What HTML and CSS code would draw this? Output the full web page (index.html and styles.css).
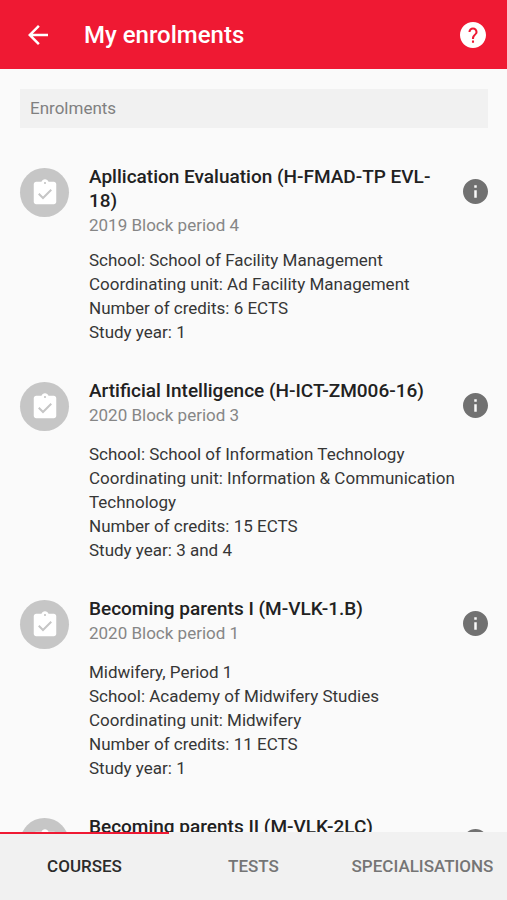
FILE: index.html
```
<!DOCTYPE html>
<html lang="en">
<head>
    <meta charset="UTF-8">
    <meta name="viewport" content="width=device-width, initial-scale=1">
    <title>My enrolments</title>
    <link rel="stylesheet" href="styles.css">
</head>
<body>
    <svg class="sprite">
        <symbol id="clipboard" viewBox="0 0 24 24">
            <path d="M19 3h-4.18C14.4 1.84 13.3 1 12 1s-2.4.84-2.82 2H5c-1.1 0-2 .9-2 2v14c0 1.1.9 2 2 2h14c1.1 0 2-.9 2-2V5c0-1.1-.9-2-2-2zm-7 .2c.44 0 .8.36.8.8s-.36.8-.8.8-.8-.36-.8-.8.36-.8.8-.8z"/>
            <path class="check" d="M7 12.6l3.4 3.4 6.6-6.6"/>
        </symbol>
        <symbol id="info" viewBox="2 2 20 20">
            <path d="M12 2C6.48 2 2 6.48 2 12s4.48 10 10 10 10-4.48 10-10S17.52 2 12 2zm1 15h-2v-6h2v6zm0-8h-2V7h2v2z"/>
        </symbol>
    </svg>
    <header class="bar">
        <button class="bar-btn">
            <svg viewBox="4 4 16 16" width="20" height="20"><path d="M20 11H7.83l5.59-5.59L12 4l-8 8 8 8 1.41-1.41L7.83 13H20v-2z"/></svg>
        </button>
        <h1>My enrolments</h1>
        <button class="bar-btn">
            <svg viewBox="2 2 20 20" width="26" height="26"><path d="M12 2C6.48 2 2 6.48 2 12s4.48 10 10 10 10-4.48 10-10S17.52 2 12 2zm.8 15.9h-1.6v-1.6h1.6v1.6zm1.9-6.4l-.8.8c-.7.7-1.1 1.3-1.1 2.7h-1.6v-.4c0-1 .4-1.9 1.1-2.6l1.1-1.1c.3-.3.5-.8.5-1.3 0-1-.8-1.8-1.9-1.8s-1.9.8-1.9 1.8H8.500c0-1.900 1.600-3.400 3.500-3.400s3.500 1.500 3.500 3.400c0 .8-.3 1.400-.8 1.900z"/></svg>
        </button>
    </header>
    <main class="content">
        <h2 class="subheader">Enrolments</h2>
        <ul class="list">
            <li class="item">
                <span class="avatar"><svg><use href="#clipboard"/></svg></span>
                <div class="head">
                    <h3>Apllication Evaluation (H-FMAD-TP EVL-18)</h3>
                    <p>2019 Block period 4</p>
                </div>
                <button class="info"><svg><use href="#info"/></svg></button>
                <div class="details">
                    <p>School: School of Facility Management</p>
                    <p>Coordinating unit: Ad Facility Management</p>
                    <p>Number of credits: 6 ECTS</p>
                    <p>Study year: 1</p>
                </div>
            </li>
            <li class="item">
                <span class="avatar"><svg><use href="#clipboard"/></svg></span>
                <div class="head">
                    <h3>Artificial Intelligence (H-ICT-ZM006-16)</h3>
                    <p>2020 Block period 3</p>
                </div>
                <button class="info"><svg><use href="#info"/></svg></button>
                <div class="details">
                    <p>School: School of Information Technology</p>
                    <p>Coordinating unit: Information &amp; Communication Technology</p>
                    <p>Number of credits: 15 ECTS</p>
                    <p>Study year: 3 and 4</p>
                </div>
            </li>
            <li class="item">
                <span class="avatar"><svg><use href="#clipboard"/></svg></span>
                <div class="head">
                    <h3>Becoming parents I (M-VLK-1.B)</h3>
                    <p>2020 Block period 1</p>
                </div>
                <button class="info"><svg><use href="#info"/></svg></button>
                <div class="details">
                    <p>Midwifery, Period 1</p>
                    <p>School: Academy of Midwifery Studies</p>
                    <p>Coordinating unit: Midwifery</p>
                    <p>Number of credits: 11 ECTS</p>
                    <p>Study year: 1</p>
                </div>
            </li>
            <li class="item">
                <span class="avatar"><svg><use href="#clipboard"/></svg></span>
                <div class="head">
                    <h3>Becoming parents II (M-VLK-2LC)</h3>
                </div>
                <button class="info"><svg><use href="#info"/></svg></button>
            </li>
        </ul>
    </main>
    <nav class="tabs">
        <button class="tab active">COURSES</button>
        <button class="tab">TESTS</button>
        <button class="tab">SPECIALISATIONS</button>
    </nav>
</body>
</html>
```
FILE: styles.css
```
* {
    margin: 0;
    padding: 0;
    box-sizing: border-box;
}
body {
    display: flex;
    flex-direction: column;
    height: 100vh;
    background: #fafafa;
    color: #212121;
    font-family: Roboto, "Liberation Sans", sans-serif;
    font-size: 17px;
    line-height: 24px;
}
button {
    border: 0;
    background: none;
    font: inherit;
    color: inherit;
    cursor: pointer;
}
svg {
    display: block;
    fill: currentColor;
}
.sprite {
    display: none;
}
.check {
    fill: none;
    stroke: #c6c6c6;
    stroke-width: 1.6;
}

/* top bar */
.bar {
    display: flex;
    align-items: center;
    flex: none;
    height: 69px;
    padding: 0 21px 0 28px;
    background: #ef1933;
    color: #fff;
}
.bar h1 {
    flex: 1;
    margin-left: 36px;
    font-size: 24px;
    font-weight: 500;
    line-height: 32px;
}

/* enrolment list */
.content {
    flex: 1;
    min-height: 0;
    padding: 20px 19px 0 20px;
    overflow-y: auto;
    scrollbar-width: none;
}
.subheader {
    padding: 7px 10px 8px;
    background: #f1f1f1;
    color: #808080;
    font-size: 17px;
    font-weight: 400;
}
.list {
    padding-top: 37px;
    list-style: none;
}
.item {
    display: grid;
    grid-template-columns: 49px 1fr 25px;
    align-items: start;
    column-gap: 20px;
    margin-bottom: 35px;
}
.avatar {
    display: flex;
    align-items: center;
    justify-content: center;
    height: 49px;
    margin-top: 3px;
    border-radius: 50%;
    background: #c6c6c6;
    color: #fff;
}
.avatar svg {
    width: 30px;
    height: 30px;
}
.head h3 {
    font-size: 19px;
    font-weight: 500;
}
.head p {
    color: #868686;
}
.info {
    margin-top: 14px;
    color: #717171;
}
.info svg {
    width: 25px;
    height: 25px;
}
.details {
    grid-column: 2 / 4;
    margin-top: 11px;
    color: #363636;
}

/* bottom tabs */
.tabs {
    display: grid;
    grid-template-columns: repeat(3, 1fr);
    flex: none;
    height: 68px;
    background: #f1f1f1;
}
.tab {
    color: #757575;
    font-weight: 500;
}
.tab.active {
    box-shadow: inset 0 2px #ef1933;
    color: #2b2b2b;
}
```
